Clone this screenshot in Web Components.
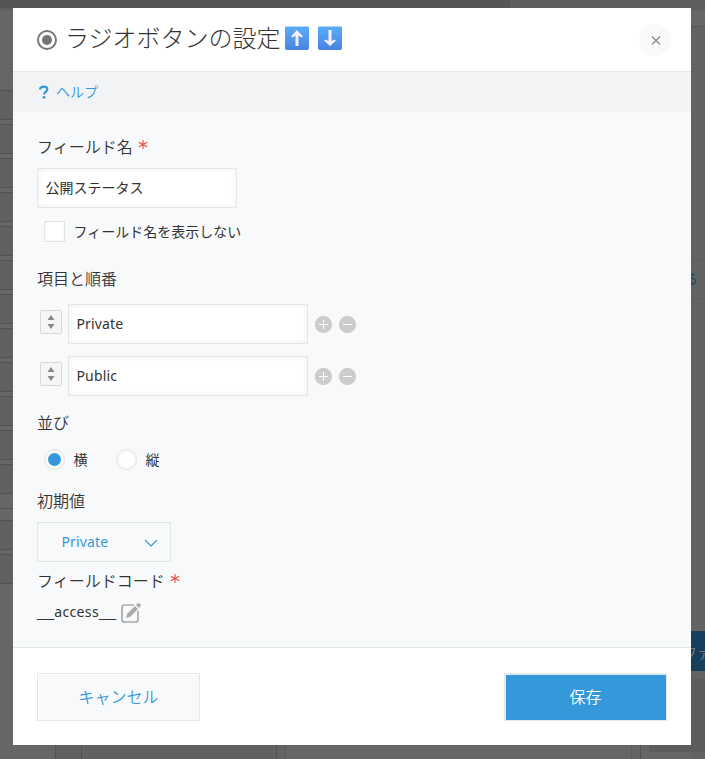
<!DOCTYPE html>
<html lang="ja"><head><meta charset="utf-8"><title>ラジオボタンの設定</title>
<style>
html,body{margin:0;width:705px;height:759px;overflow:hidden}
body{display:grid;background:#646664;font-family:"Noto Sans","Noto Sans CJK JP",sans-serif;color:#333;font-size:14px}
app-backdrop,settings-dialog{grid-area:1/1}
.u{font:15.5px/1 "Liberation Sans",sans-serif}
</style></head><body>
<app-backdrop></app-backdrop>
<settings-dialog>
  <dialog-title slot="header">ラジオボタンの設定</dialog-title>
  <help-link slot="help">ヘルプ</help-link>
  <field-label required style="margin-top:22px">フィールド名</field-label>
  <text-box style="width:200px;margin-top:10px">公開ステータス</text-box>
  <choice-mark style="margin:13px 0 0 7px">フィールド名を表示しない</choice-mark>
  <field-label style="margin-top:23px">項目と順番</field-label>
  <option-row style="margin-top:14px">Private</option-row>
  <option-row style="margin-top:12px">Public</option-row>
  <field-label style="margin-top:14px">並び</field-label>
  <radio-group><choice-mark round checked>横</choice-mark><choice-mark round>縦</choice-mark></radio-group>
  <field-label style="margin-top:17px">初期値</field-label>
  <drop-down>Private</drop-down>
  <field-label required style="margin-top:6px">フィールドコード</field-label>
  <field-code><span class="u">__</span><span style="letter-spacing:.35px">access</span><span class="u">__</span></field-code>
  <action-button slot="footer">キャンセル</action-button>
  <action-button slot="footer" primary>保存</action-button>
</settings-dialog>
<script>
const define=(name,html)=>{
  const t=document.createElement('template');t.innerHTML=html;
  customElements.define(name,class extends HTMLElement{
    constructor(){super();this.attachShadow({mode:'open'}).append(t.content.cloneNode(true));}
  });
};
const rows=[...Array(12)].map((_,i)=>`<rect x="-5.5" y="${90.5+34*i}" width="30" height="29"/>`).join('');
define('app-backdrop',`<style>:host{display:block;width:705px;height:759px}svg{display:block}</style>
<svg width="705" height="759" font-family="Noto Sans CJK JP" font-size="14">
<path fill="#666" d="M0 0h705v759H0z"/><path fill="#5e605e" d="M0 0h705v10H0z"/><path fill="#545654" d="M0 0h510v8H0z"/>
<path fill="#626462" d="M691 27h14v732h-14z"/><path fill="#666" d="M691 10h14v16h-14z"/><path stroke="#565656" d="M691 26.5h14"/>
<g fill="#606060" stroke="#525252">${rows}<rect x="-5.5" y="520.5" width="30" height="29"/><rect x="-5.5" y="554.5" width="30" height="29"/></g>
<path stroke="#525252" d="M0 508.5h13"/>
<path stroke="#5b5d5b" d="M691 259.5h14M691 298.5h14"/>
<path fill="#606260" d="M55 745h222v14H55z"/><path fill="#626462" d="M277 745h9v14h-9z"/><path fill="#646664" d="M632 745h8v14h-8z"/>
<path stroke="#505450" d="M55.500 745v14M81.500 745v14M276.500 745v14M640.500 745v14"/><path stroke="#5a5c5a" d="M285.500 745v14M631.500 745v14"/>
<path fill="#5b5d5b" d="M649 679h56v73h-56z"/>
<path fill="#173f5c" d="M691 631h14v40h-14z"/>
<text x="683" y="658" fill="#777">ファ</text><text x="684" y="284" fill="#174766">る</text>
<path fill="#8b2330" d="M109 4h1v1h-1zM309 4h1v1h-1z"/></svg>`);
define('settings-dialog',`<style>
:host{display:flex;flex-direction:column;width:678px;height:737px;margin:8px 0 0 13px;background:#fff;z-index:1}
header{height:63px;border-bottom:1px solid #e3e7e8;flex:none}
.help{height:40px;background:#f1f3f5;flex:none}
main{flex:1;background:#f8f9fb;padding:0 24px;display:flex;flex-direction:column;align-items:flex-start;box-sizing:border-box;min-height:0}
footer{height:98px;border-top:1px solid #e3e7e8;flex:none;display:flex;justify-content:space-between;padding:25px 24px 0;box-sizing:border-box}
</style><header><slot name="header"></slot></header><div class="help"><slot name="help"></slot></div><main><slot></slot></main><footer><slot name="footer"></slot></footer>`);
define('dialog-title',`<style>
:host{display:flex;height:63px;align-items:center;padding:0 20px 0 24px;font-size:24px;font-weight:300;font-family:"Noto Sans CJK JP",sans-serif}
span{margin:-5px 0 0 8px;line-height:36px}.a{margin:-3px 0 0 4px}.a+.a{margin-left:9px}.r{margin-top:1px}.x{margin:1px 0 0 auto}
</style><svg class="r" width="20" height="20"><circle cx="10" cy="10" r="9" fill="none" stroke="#74747b" stroke-width="1.900"/><circle cx="10" cy="10" r="5" fill="#74747b"/></svg>
<span><slot></slot></span>
<svg class="a" width="24" height="24"><defs><linearGradient id="g" x2="0" y2="1"><stop stop-color="#58aef9"/><stop offset="1" stop-color="#4a82e2"/></linearGradient></defs><rect width="24" height="24" rx="2" fill="url(#g)"/><path d="M1 .5h22" stroke="#b5d3ef"/><path fill="#f8efff" d="M12 4l6 6.500-1.500 1-3-2V20h-3V9.500l-3 2-1.500-1z"/></svg>
<svg class="a" width="24" height="24"><rect width="24" height="24" rx="2" fill="url(#g)"/><path d="M1 .5h22" stroke="#b5d3ef"/><path fill="#f8efff" d="M12 20l6-5.500-1.500-1-3 1.500V4h-3v11l-3-1.500-1.500 1z"/></svg>
<svg class="x" width="32" height="32"><circle cx="16" cy="16" r="16" fill="#f8f9fb"/><path d="M13 12.500l8 8m0-8l-8 8" stroke="#888" stroke-width="1.200"/></svg>`);
define('help-link',`<style>:host{display:flex;height:40px;align-items:center;padding-left:25px;color:#3498db;gap:6px;font-weight:350;font-family:"Noto Sans CJK JP",sans-serif}span{margin-top:-3px}</style>
<svg width="12" height="14"><path d="M2 4.500C2.300 2.400 3.800 1.700 5.700 1.700 8 1.700 9.300 2.800 9.300 4.500 9.300 6.700 6.100 6.600 6.100 9.500" fill="none" stroke="#3498db" stroke-width="2.200"/><circle cx="6" cy="12.300" r="1.400" fill="#3498db"/></svg><span><slot></slot></span>`);
define('field-label',`<style>:host{display:flex;font-family:"Noto Sans CJK JP",sans-serif;font-weight:350;font-size:16px;line-height:24px;height:24px}i{display:none;color:#e74c3c;font-style:normal;margin-left:5px}:host([required]) i{display:block}svg{display:block;margin-top:5px}</style><slot></slot><i><svg width="10" height="12"><path d="M5 1v9M.8 3.300l8.400 4.400m0-4.400L.8 7.700" stroke="#e74c3c" stroke-width="1.100"/></svg></i>`);
define('text-box',`<style>:host{display:block;flex:none;box-sizing:border-box;height:40px;line-height:38px;padding-left:7.500px;border:1px solid #e3e7e8;background:#fff;box-shadow:inset 2px 2px 4px #f5f5f5,inset -2px -2px 4px #f5f5f5}</style><slot></slot>`);
define('choice-mark',`<style>:host{display:flex;align-items:center;height:22px;line-height:22px}
b{box-sizing:border-box;width:21px;height:21px;border:1px solid #e1e4e5;background:#fff;box-shadow:inset 0 0 2px #eee;margin:-1px 8.500px 0 0;display:grid;place-items:center}
:host([round]) b{border-radius:50%;box-shadow:inset 0 0 4px #eee}:host([checked]) b::after{content:"";width:13px;height:13px;border-radius:50%;background:#3498db}</style><b></b><slot></slot>`);
define('radio-group',`<style>:host{display:flex;gap:28.500px;margin:15px 0 0 7px}</style><slot></slot>`);
define('option-row',`<style>:host{display:flex;height:40px;flex:none}.s{margin:6px 6px 0 3px}text-box{width:240px;letter-spacing:.15px}.p{margin:12px 0 0 7px}</style>
<svg class="s" width="22" height="25"><rect x=".5" y=".5" width="21" height="23" rx="1.500" fill="#f5f5f5" stroke="#d7dada"/><path d="M11 5l3.500 5h-7zM11 19l-3.500-5h7z" fill="#888"/></svg><text-box><slot></slot></text-box>
<svg class="p" width="42" height="18"><circle cx="8.500" cy="8.500" r="8.600" fill="#ccc"/><circle cx="32.500" cy="8.500" r="8.600" fill="#ccc"/><path d="M4 8.500h9M8.500 4v9M28 8.500h9" stroke="#fff"/></svg>`);
define('drop-down',`<style>:host{display:flex;box-sizing:border-box;width:134px;height:40px;flex:none;margin-top:10px;border:1px solid #e3e7e8;line-height:38px;letter-spacing:.15px;color:#3498db;padding:0 12px 0 23.500px;justify-content:space-between;align-items:center}svg{margin-top:3px}</style><slot></slot><svg width="14" height="9"><path d="M1 1l6 6 6-6" fill="none" stroke="#3498db" stroke-width="1.200"/></svg>`);
define('field-code',`<style>:host{display:flex;height:24px;line-height:24px;margin-top:8px;gap:5px}span{display:flex;align-items:baseline;margin-top:0}svg{margin-top:3px}</style><span><slot></slot></span><svg width="20" height="20"><path d="M13 2H3.500Q1 2 1 4.500v12Q1 19 3.500 19h11q2.500 0 2.500-2.500V8" fill="none" stroke="#aaa" stroke-width="1.700"/><path d="M5 15l1.200-4.200L14 3l3 3-7.800 7.800zM15 2l1.500-1.500q1-1 2 0l1 1q.8.800 0 1.600L18 5z" fill="#aaa"/></svg>`);
define('action-button',`<style>:host{display:block;box-sizing:border-box;width:163px;height:48px;border:1px solid #e3e7e8;background:#f8f9fb;box-shadow:inset 1px 1px #fff;color:#3498db;font:350 16px/44px "Noto Sans CJK JP",sans-serif;text-align:center}:host([primary]){background:#3498db;color:#fff;box-shadow:inset 1px 1px #d9edf9}</style><slot></slot>`);
</script></body></html>
